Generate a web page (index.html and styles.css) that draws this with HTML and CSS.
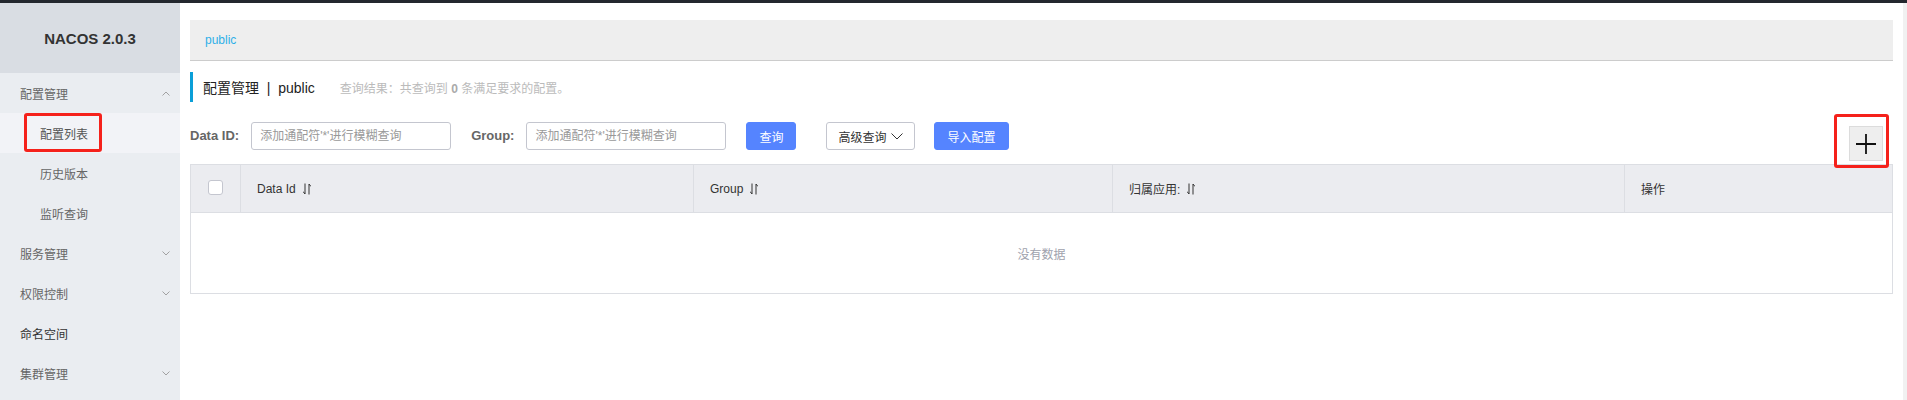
FILE: index.html
```html
<!DOCTYPE html>
<html lang="zh-CN">
<head>
<meta charset="utf-8">
<title>Nacos</title>
<link rel="stylesheet" href="styles.css">
</head>
<body>
<div class="topbar"></div>
<div class="layout">
  <aside class="sidebar">
    <div class="logo">NACOS 2.0.3</div>
    <ul class="menu">
      <li class="menu-item">配置管理<svg class="chev" viewBox="0 0 8 5"><path d="M0.5 4.5 L4 1 L7.5 4.5" /></svg></li>
      <li class="sub-item active">配置列表<span class="mark mark-menu"></span></li>
      <li class="sub-item">历史版本</li>
      <li class="sub-item">监听查询</li>
      <li class="menu-item">服务管理<svg class="chev" viewBox="0 0 8 5"><path d="M0.5 0.5 L4 4 L7.5 0.5" /></svg></li>
      <li class="menu-item">权限控制<svg class="chev" viewBox="0 0 8 5"><path d="M0.5 0.5 L4 4 L7.5 0.5" /></svg></li>
      <li class="menu-item dark">命名空间</li>
      <li class="menu-item">集群管理<svg class="chev" viewBox="0 0 8 5"><path d="M0.5 0.5 L4 4 L7.5 0.5" /></svg></li>
    </ul>
  </aside>
  <main class="main">
    <div class="crumb">public</div>
    <div class="title">
      <span class="title-text">配置管理&nbsp;&nbsp;|&nbsp;&nbsp;public</span>
      <span class="result">查询结果：共查询到 <b>0</b> 条满足要求的配置。</span>
    </div>
    <div class="search">
      <label class="lbl">Data ID:</label>
      <input class="inp" type="text" placeholder="添加通配符'*'进行模糊查询">
      <label class="lbl">Group:</label>
      <input class="inp" type="text" placeholder="添加通配符'*'进行模糊查询">
      <button class="btn btn-primary btn-query">查询</button>
      <button class="btn btn-normal">高级查询<svg class="btn-chev" viewBox="0 0 12 7"><path d="M0.5 0.5 L6 6 L11.5 0.5" /></svg></button>
      <button class="btn btn-primary btn-import">导入配置</button>
      <div class="add-wrap">
        <button class="add-btn"><svg viewBox="0 0 20 20"><path d="M0 10 H20 M10 0 V20" /></svg></button>
        <span class="mark mark-add"></span>
      </div>
    </div>
    <div class="table">
      <div class="thead">
        <div class="th th-check"><span class="checkbox"></span></div>
        <div class="th">Data Id<svg class="sort" viewBox="0 0 8 12"><path d="M2 0.5 V11 M0 8.5 L2 11 M6 11.5 V1 M6 1 L8 3.5" /></svg></div>
        <div class="th">Group<svg class="sort" viewBox="0 0 8 12"><path d="M2 0.5 V11 M0 8.5 L2 11 M6 11.5 V1 M6 1 L8 3.5" /></svg></div>
        <div class="th">归属应用:<svg class="sort" viewBox="0 0 8 12"><path d="M2 0.5 V11 M0 8.5 L2 11 M6 11.5 V1 M6 1 L8 3.5" /></svg></div>
        <div class="th">操作</div>
      </div>
      <div class="tbody">没有数据</div>
    </div>
  </main>
  <div class="scroll-strip"></div>
</div>
</body>
</html>
```
FILE: styles.css
```css
* { box-sizing: border-box; }
html, body { margin: 0; padding: 0; height: 100%; }
body {
  font-family: "Liberation Sans", "Noto Sans CJK SC", sans-serif;
  font-size: 12px;
  color: #333;
  background: #fff;
  overflow: hidden;
}
.topbar { height: 3px; background: #23272e; }
.layout { display: flex; height: 397px; }
.sidebar { width: 180px; flex: none; background: #eaedf1; }
.logo {
  height: 70px;
  background: #d9dde3;
  display: flex;
  align-items: center;
  justify-content: center;
  font-weight: bold;
  font-size: 15px;
  color: #333;
}
.menu { list-style: none; margin: 0; padding: 0; }
.menu-item, .sub-item {
  height: 40px;
  display: flex;
  align-items: center;
  font-size: 12px;
  color: #666;
  position: relative;
}
.menu-item { padding-left: 20px; }
.menu-item.dark { color: #333; }
.sub-item { padding-left: 40px; }
.sub-item.active { background: #f2f3f7; color: #555; }
.chev {
  width: 8px;
  height: 5px;
  margin-left: auto;
  margin-right: 10px;
  fill: none;
  stroke: #999;
  stroke-width: 0.9;
}
.mark {
  position: absolute;
  border: 3px solid #f5211b;
  border-radius: 3px;
  pointer-events: none;
}
.mark-menu { left: 24px; top: 0; width: 78px; height: 39px; }

.main { flex: 1; padding: 17px 10px 0 10px; }
.scroll-strip { width: 4px; flex: none; background: #f1f1f1; }
.crumb {
  height: 41px;
  background: #eeeeee;
  border-bottom: 1px solid #cccccc;
  display: flex;
  align-items: center;
  padding-left: 15px;
  color: #2eb0e8;
  font-size: 12px;
}
.title {
  margin-top: 11px;
  height: 30px;
  border-left: 3px solid #0a9fd8;
  padding-left: 10px;
  display: flex;
  align-items: center;
}
.title-text { font-size: 14px; color: #222; }
.result { margin-left: 25px; font-size: 12px; color: #bbb; }
.result b { color: #aaa; }

.search {
  margin-top: 20px;
  display: flex;
  align-items: flex-start;
  height: 39px;
}
.lbl {
  font-weight: bold;
  font-size: 13px;
  color: #666;
  line-height: 28px;
  margin-right: 12px;
}
.inp {
  width: 200px;
  height: 28px;
  border: 1px solid #c4c6cf;
  border-radius: 3px;
  padding: 0 8px;
  font-family: inherit;
  font-size: 12px;
  color: #333;
  margin-right: 20px;
  outline: none;
}
.inp::placeholder { color: #999; }
.btn {
  height: 28px;
  border-radius: 3px;
  font-family: inherit;
  font-size: 12px;
  padding: 0 12px;
  display: flex;
  align-items: center;
  cursor: pointer;
}
.btn-primary { background: #5584ff; border: 1px solid #5584ff; color: #fff; margin-right: 20px; }
.btn-query { margin-right: 30px; }
.btn-normal { background: #fff; border: 1px solid #c4c6cf; color: #333; margin-right: 19px; padding: 0 11px; }
.btn-chev {
  width: 12px;
  height: 7px;
  margin-left: 5px;
  fill: none;
  stroke: #333;
  stroke-width: 1;
}
.add-wrap { margin-left: auto; margin-right: 10px; margin-top: 4px; position: relative; }
.add-btn {
  width: 34px;
  height: 35px;
  background: #eeeeee;
  border: 1px solid #dcdcdc;
  padding: 0;
  display: flex;
  align-items: center;
  justify-content: center;
}
.add-btn svg { width: 20px; height: 20px; fill: none; stroke: #111; stroke-width: 1.8; }
.mark-add { left: -15px; top: -12px; width: 55px; height: 54px; }

.table { margin-top: 3px; border: 1px solid #dcdee3; }
.thead {
  display: grid;
  grid-template-columns: 49px 453px 419px 512px 1fr;
  height: 48px;
  background: #ebecf0;
  border-bottom: 1px solid #dcdee3;
}
.th {
  display: flex;
  align-items: center;
  padding-left: 16px;
  border-left: 1px solid #dcdee3;
  font-size: 12px;
  color: #333;
}
.th-check { border-left: none; padding-left: 0; justify-content: center; }
.checkbox {
  width: 15px;
  height: 15px;
  background: #fff;
  border: 1px solid #c4c6cf;
  border-radius: 3px;
  margin-top: -3px;
}
.sort {
  width: 8px;
  height: 12px;
  margin-left: 7px;
  fill: none;
  stroke: #333;
  stroke-width: 1;
}
.tbody {
  height: 80px;
  display: flex;
  align-items: center;
  justify-content: center;
  color: #a0a2ad;
  font-size: 12px;
}
```
